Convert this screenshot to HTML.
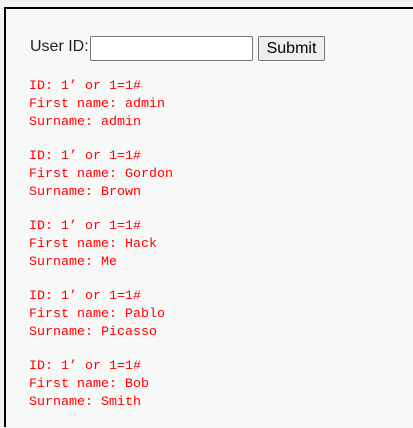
<!DOCTYPE html>
<html><head><style>
html,body{margin:0;padding:0;width:413px;height:427px;overflow:hidden;background:#f2f2f2}
.box{position:absolute;left:4px;top:7px;width:407px;height:418px;border-left:2px solid #000;border-top:2px solid #000;background:#f7f8f8}
.lbl{position:absolute;left:30px;top:38px;font:16px "Liberation Sans",sans-serif;color:#222}
.inp{position:absolute;left:90px;top:36px;width:161px;height:23px;border:1px solid #767676;border-radius:2px;background:#fff}
.btn{position:absolute;left:258px;top:36px;width:65px;height:23px;border:1px solid #767676;border-radius:2px;background:#efefef;font:16px "Liberation Sans",sans-serif;color:#000;text-align:center;line-height:23px}
.out{position:absolute;left:29px;top:78px;margin:0;font:13.33px/18px "Liberation Mono","Noto Sans CJK SC",monospace;color:#f00;white-space:pre}
.out div{margin-bottom:16px}
</style></head><body>
<div class="box"></div>
<div class="lbl">User ID:</div>
<div class="inp"></div>
<div class="btn">Submit</div>
<div class="out"><div>ID: 1’ or 1=1#
First name: admin
Surname: admin</div><div>ID: 1’ or 1=1#
First name: Gordon
Surname: Brown</div><div>ID: 1’ or 1=1#
First name: Hack
Surname: Me</div><div>ID: 1’ or 1=1#
First name: Pablo
Surname: Picasso</div><div>ID: 1’ or 1=1#
First name: Bob
Surname: Smith</div></div>
</body></html>
